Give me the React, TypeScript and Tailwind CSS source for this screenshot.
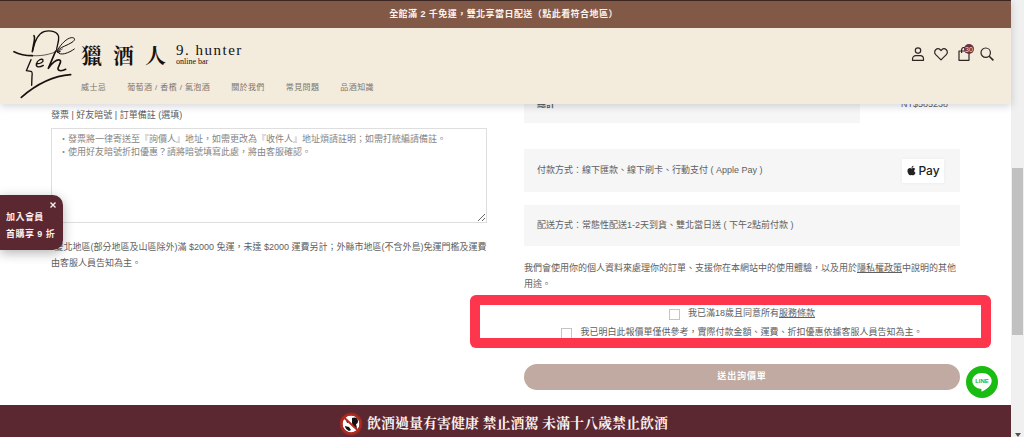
import type { ReactNode } from 'react';
import { FaApple } from 'react-icons/fa';

const navItems = [
  '威士忌',
  '葡萄酒 / 香檳 / 氣泡酒',
  '關於我們',
  '常見問題',
  '品酒知識',
];

const notePlaceholder =
  '・發票將一律寄送至『詢價人』地址，如需更改為『收件人』地址煩請註明；如需打統編請備註。\n・使用好友暗號折扣優惠？請將暗號填寫此處，將由客服確認。';

function SignatureLogo() {
  return (
    <svg
      viewBox="39 15 198 216"
      className="h-[72px] w-[66px] shrink-0"
      fill="none"
      stroke="#15110f"
      strokeLinecap="round"
      strokeLinejoin="round"
      aria-hidden="true"
    >
      <path strokeWidth="5" d="M102 38c3 4 2 9 1 15l-6 33" />
      <path
        strokeWidth="4"
        d="M98 82c5-22 15-50 34-56 20-6 42 1 44 16 1 14-5 26-6 37 0 9 5 11 10 6"
      />
      <path
        strokeWidth="3"
        d="M172 82c12-20 28-36 42-38 13-1 12 8 2 14-13 9-32 13-40 22-8 11 5 15 18 12 11-3 21-8 29-14"
      />
      <path strokeWidth="5" d="M42 86c16 8 34 12 55 12" />
      <path strokeWidth="2" d="M97 98c38 2 62-7 90-20" />
      <path strokeWidth="4" d="M93 110l-14 33 14 2c5 1 4 8 3 15l-1 27" />
      <path
        strokeWidth="4"
        d="M109 122c12 1 22-5 20-11-3-6-17 0-20 12-2 11 11 10 21 4"
      />
      <path
        strokeWidth="5"
        d="M167 84l-22 52c10-16 25-28 34-25 9 4-7 20-5 28 2 6 14 5 23 0"
      />
      <path strokeWidth="5" d="M64 223c38-33 90-64 148-68" />
    </svg>
  );
}

function IconButton({
  label,
  children,
}: {
  label: string;
  children: ReactNode;
}) {
  return (
    <button type="button" aria-label={label} className="relative">
      <svg
        viewBox="0 0 14 14"
        className="size-[14px]"
        fill="none"
        stroke="#2d2624"
        strokeWidth="1.2"
        strokeLinejoin="round"
        aria-hidden="true"
      >
        {children}
      </svg>
      {label === '購物車' && (
        <span className="absolute -top-[3px] left-[7px] flex size-[10px] items-center justify-center rounded-full bg-[#6b3240] text-[7px] leading-none text-[#f3dfe0]">
          30
        </span>
      )}
    </button>
  );
}

function Header() {
  return (
    <header className="relative z-10 shadow-[0_2px_8px_rgba(40,40,70,0.2)]">
      <div className="flex h-7 items-center justify-center border-t border-[#3b2520] bg-[#825847] pr-1">
        <a
          href="#area"
          className="text-[9px] font-bold tracking-wider text-[#fbf3ec]"
        >
          全館滿 2 千免運，雙北享當日配送（點此看符合地區）
        </a>
      </div>
      <div className="flex h-[76px] bg-[#f3ebdc] pr-[17px] pl-[13px]">
        <SignatureLogo />
        <div className="ml-0.5 flex flex-col">
          <a
            href="#home"
            className="mt-2 flex h-9 items-center gap-[10px] text-[#15110f]"
          >
            <span className="flex gap-[11px] font-['Noto_Serif_CJK_TC','Noto_Sans_CJK_TC',serif] text-[21px] leading-none font-bold">
              <span>獵</span>
              <span>酒</span>
              <span>人</span>
            </span>
            <span className="flex flex-col gap-px font-['Liberation_Serif',serif]">
              <span className="text-[15px] leading-[14px] tracking-widest">
                9. hunter
              </span>
              <span className="text-[8px] leading-[8px]">online bar</span>
            </span>
          </a>
          <nav className="mt-[9px] flex h-[14px] items-center gap-[21px] text-[8px] tracking-wider whitespace-nowrap text-[#7d746c]">
            {navItems.map((item) => (
              <a key={item} href="#shop">
                {item}
              </a>
            ))}
          </nav>
        </div>
        <div className="mt-[19px] ml-auto flex h-[14px] gap-[9px]">
          <IconButton label="會員">
            <circle cx="7" cy="3.6" r="2.7" />
            <path d="M1.5 13.3V12a3.3 3.3 0 0 1 3.3-3.3h4.4a3.3 3.3 0 0 1 3.3 3.3v1.3z" />
          </IconButton>
          <IconButton label="收藏">
            <path d="M7 12.9 1.7 7.6a3.3 3.3 0 0 1 0-4.8 3.3 3.3 0 0 1 4.6 0L7 3.6l.7-.8a3.3 3.3 0 0 1 4.6 0 3.3 3.3 0 0 1 0 4.8z" />
          </IconButton>
          <IconButton label="購物車">
            <path d="M2 4h10v9.3H2zM4.6 6V2.8a2.2 2.2 0 0 1 4.6 0V6" />
          </IconButton>
          <IconButton label="搜尋">
            <circle cx="5.7" cy="5.7" r="4.7" />
            <path d="m9.2 9.2 4.2 4.2" strokeWidth="1.6" />
          </IconButton>
        </div>
      </div>
    </header>
  );
}

function OrderNotes() {
  return (
    <section className="pt-5">
      <label htmlFor="notes" className="block leading-4">
        發票 | 好友暗號 | 訂單備註 (選填)
      </label>
      <textarea
        id="notes"
        placeholder={notePlaceholder}
        className="mt-[5px] block h-[95px] w-full resize border border-[#dedede] px-[7px] py-1 leading-[13px] placeholder:text-[#858585]"
      />
      <p className="mt-4 leading-4">
        *雙北地區(部分地區及山區除外)滿 $2000 免運，未達 $2000
        運費另計；外縣市地區(不含外島)免運門檻及運費由客服人員告知為主。
      </p>
    </section>
  );
}

function Checkout() {
  return (
    <section>
      <table className="w-full">
        <tbody>
          <tr className="h-9">
            <th className="bg-[#f6f6f6] px-[13px] text-left font-bold">總計</th>
            <td className="w-[100px] pr-3 text-right">NT$585238</td>
          </tr>
        </tbody>
      </table>
      <div className="mt-[26px] flex h-[43px] items-center justify-between bg-[#f6f6f6] pr-4 pl-[13px]">
        <p>付款方式：線下匯款、線下刷卡、行動支付 ( Apple Pay )</p>
        <span className="flex h-6 w-[42px] items-center justify-center gap-px bg-white font-['Inter',sans-serif] text-[12px] font-medium text-[#222] shadow-[0_0_3px_rgba(0,0,0,0.06)]">
          <FaApple className="size-[11px]" />
          Pay
        </span>
      </div>
      <div className="mt-[13px] flex h-[41px] items-center bg-[#f6f6f6] px-[13px]">
        <p>配送方式：常態性配送1-2天到貨、雙北當日送 ( 下午2點前付款 )</p>
      </div>
      <p className="mt-[14px] leading-4">
        我們會使用你的個人資料來處理你的訂單、支援你在本網站中的使用體驗，以及用於
        <a href="#privacy" className="underline">
          隱私權政策
        </a>
        中說明的其他用途。
      </p>
      <div className="relative mt-[13px]">
        <div className="flex h-[18px] items-center justify-center gap-2">
          <input
            id="age"
            type="checkbox"
            className="size-[11px] appearance-none border border-[#c4c4c4] bg-white checked:bg-[#825847]"
          />
          <label htmlFor="age">
            我已滿18歲且同意所有
            <a href="#terms" className="underline">
              服務條款
            </a>
          </label>
        </div>
        <div className="flex h-5 items-center justify-center gap-2">
          <input
            id="quote"
            type="checkbox"
            className="size-[11px] appearance-none border border-[#c4c4c4] bg-white checked:bg-[#825847]"
          />
          <label htmlFor="quote">
            我已明白此報價單僅供參考，實際付款金額、運費、折扣優惠依據客服人員告知為主。
          </label>
        </div>
        {/* highlight box round the two consent rows */}
        <div className="pointer-events-none absolute -top-[10px] -right-[31px] -left-[54px] h-[53px] rounded-md bg-[#fd354d] [clip-path:polygon(evenodd,0_0,100%_0,100%_100%,0_100%,0_0,10px_10px,calc(100%-10px)_10px,calc(100%-10px)_calc(100%-10px),10px_calc(100%-10px),10px_10px)]" />
      </div>
      <button
        type="button"
        className="mt-[21px] mb-[15px] block h-[26px] w-full rounded-full bg-[#c0aaa1] font-bold tracking-widest text-white"
      >
        送出詢價單
      </button>
    </section>
  );
}

function Footer() {
  return (
    <footer className="mt-auto flex h-8 items-center justify-center gap-1 bg-[#5b2730] pt-1.5 pr-1 text-[#fbf3f0]">
      <svg viewBox="0 0 24 24" className="size-6" aria-hidden="true">
        <circle cx="12" cy="12" r="11.5" fill="#8d2a24" />
        <circle cx="12" cy="12" r="8.5" fill="#fff" />
        <path
          d="M13 6c2-1 6-1 6 3 0 2-1 3-2 3l1 4-4-1-1-4zM6 14l4 1 2 3-2 1c-2-1-4-3-4-5zM7 8l3 2-2 1z"
          fill="#111"
        />
        <path d="m5.5 6 13 12" stroke="#b02a20" strokeWidth="2" />
        <circle
          cx="12"
          cy="12"
          r="9.5"
          fill="none"
          stroke="#b02a20"
          strokeWidth="2"
        />
      </svg>
      <p className="font-['Liberation_Serif','Noto_Serif_CJK_TC','Noto_Sans_CJK_TC',serif] text-[14px] leading-5 font-bold">
        飲酒過量有害健康 禁止酒駕 未滿十八歲禁止飲酒
      </p>
    </footer>
  );
}

function MemberPopup() {
  return (
    <aside className="absolute top-[195px] left-0 z-20 h-[55px] w-[63px] rounded-r-[10px] bg-[#5b2730] pt-[14px] pl-1.5 text-[9px] font-bold tracking-wider text-[#fbf0ee] shadow-[0_3px_12px_rgba(0,0,0,0.3)]">
      <button
        type="button"
        aria-label="關閉"
        className="absolute top-[7px] right-[7px]"
      >
        <svg
          viewBox="0 0 6 6"
          className="size-[6px]"
          stroke="currentColor"
          strokeWidth="1.4"
          aria-hidden="true"
        >
          <path d="m.5.5 5 5m0-5-5 5" />
        </svg>
      </button>
      <a href="#join" className="block leading-[17px] whitespace-nowrap">
        加入會員
        <br />
        首購享 9 折
      </a>
    </aside>
  );
}

function LineButton() {
  return (
    <a
      href="#line"
      aria-label="LINE"
      className="absolute right-[13px] bottom-[39px] z-20"
    >
      <svg viewBox="0 0 32 32" className="size-8">
        <circle cx="16" cy="16" r="16" fill="#1abb12" />
        <path
          d="M16 7c-5.500 0-9.700 3.500-9.700 7.900 0 4 3.500 7.200 8.200 7.800 1.200.2 1 .7.900 2-.1.800.3 1 1 .6 3-1.600 9.300-5.500 9.300-10.400C25.700 10.500 21.500 7 16 7z"
          fill="#fff"
        />
        <text
          x="16"
          y="17"
          textAnchor="middle"
          fontFamily="Liberation Sans, sans-serif"
          fontSize="6"
          fontWeight="bold"
          fill="#1abb12"
        >
          LINE
        </text>
      </svg>
    </a>
  );
}

function ScrollRail() {
  return (
    <div className="flex w-[13px] shrink-0 flex-col items-center bg-[#f0f0f0]">
      <div className="mt-[168px] h-[167px] w-[11px] bg-[#c1c1c1]" />
      <svg
        viewBox="0 0 6 4"
        className="mt-auto h-1 w-1.5"
        fill="#505050"
        aria-hidden="true"
      >
        <path d="M0 0h6L3 4z" />
      </svg>
    </div>
  );
}

export default function App() {
  return (
    <div className="flex min-h-screen bg-white font-['Liberation_Sans','Noto_Sans_CJK_TC',sans-serif] text-[9px] text-[#606060]">
      <div className="relative flex min-w-0 flex-1 flex-col">
        <Header />
        <main className="-mt-[17px] grid grid-cols-2 gap-[37px] px-[51px]">
          <OrderNotes />
          <Checkout />
        </main>
        <Footer />
        <MemberPopup />
        <LineButton />
      </div>
      <ScrollRail />
    </div>
  );
}
